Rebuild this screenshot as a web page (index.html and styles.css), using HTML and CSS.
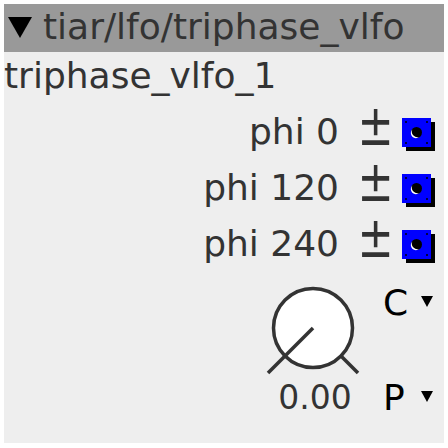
FILE: index.html
```html
<!DOCTYPE html>
<html>
<head>
<meta charset="utf-8">
<link rel="stylesheet" href="styles.css">
</head>
<body>
<div class="object">
  <div class="header">
    <svg class="collapse" width="24" height="21" viewBox="0 0 24 21"><polygon points="0,0 24,0 12,21" fill="#000"/></svg>
    <span class="title">tiar/lfo/triphase_vlfo</span>
  </div>
  <div class="name">triphase_vlfo_1</div>
  <div class="params">
    <div class="param">
      <span class="label">phi 0</span>
      <span class="pm"><span class="pm-glyph">±</span></span>
      <span class="toggle">
        <svg width="29" height="29" viewBox="0 0 29 29">
          <rect x="3" y="3" width="2" height="2" fill="#000044"/><rect x="24" y="3" width="2" height="2" fill="#000044"/>
          <rect x="3" y="24" width="2" height="2" fill="#000044"/><rect x="24" y="24" width="2" height="2" fill="#000044"/>
          <circle cx="14.5" cy="14.5" r="5.5" fill="#000"/>
          <path d="M10.3 11.5 A4.2 4.2 0 0 0 17.5 18.7 A5.5 5.5 0 0 1 10.3 11.5 Z" fill="#fff"/>
        </svg>
      </span>
    </div>
    <div class="param">
      <span class="label">phi 120</span>
      <span class="pm"><span class="pm-glyph">±</span></span>
      <span class="toggle">
        <svg width="29" height="29" viewBox="0 0 29 29">
          <rect x="3" y="3" width="2" height="2" fill="#000044"/><rect x="24" y="3" width="2" height="2" fill="#000044"/>
          <rect x="3" y="24" width="2" height="2" fill="#000044"/><rect x="24" y="24" width="2" height="2" fill="#000044"/>
          <circle cx="14.5" cy="14.5" r="5.5" fill="#000"/>
          <path d="M10.3 11.5 A4.2 4.2 0 0 0 17.5 18.7 A5.5 5.5 0 0 1 10.3 11.5 Z" fill="#fff"/>
        </svg>
      </span>
    </div>
    <div class="param">
      <span class="label">phi 240</span>
      <span class="pm"><span class="pm-glyph">±</span></span>
      <span class="toggle">
        <svg width="29" height="29" viewBox="0 0 29 29">
          <rect x="3" y="3" width="2" height="2" fill="#000044"/><rect x="24" y="3" width="2" height="2" fill="#000044"/>
          <rect x="3" y="24" width="2" height="2" fill="#000044"/><rect x="24" y="24" width="2" height="2" fill="#000044"/>
          <circle cx="14.5" cy="14.5" r="5.5" fill="#000"/>
          <path d="M10.3 11.5 A4.2 4.2 0 0 0 17.5 18.7 A5.5 5.5 0 0 1 10.3 11.5 Z" fill="#fff"/>
        </svg>
      </span>
    </div>
  </div>
  <div class="knobrow">
    <div class="knobcol">
      <svg class="knob" width="96" height="96" viewBox="0 0 96 96">
        <circle cx="49" cy="46" r="39.5" fill="#fff" stroke="#333" stroke-width="3.5"/>
        <line x1="49" y1="46" x2="4" y2="91" stroke="#333" stroke-width="3.5"/>
        <line x1="77" y1="74" x2="94" y2="91" stroke="#333" stroke-width="3.5"/>
      </svg>
      <div class="value">0.00</div>
    </div>
    <div class="selcol">
      <div class="sel">
        <span class="sel-label">C</span>
        <svg class="dd" width="12" height="11" viewBox="0 0 12 11"><polygon points="0,0 12,0 6,11" fill="#000"/></svg>
      </div>
      <div class="sel sel-p">
        <span class="sel-label">P</span>
        <svg class="dd" width="12" height="11" viewBox="0 0 12 11"><polygon points="0,0 12,0 6,11" fill="#000"/></svg>
      </div>
    </div>
  </div>
</div>
</body>
</html>
```

FILE: styles.css
```css
html, body {
  margin: 0;
  padding: 0;
  background: #ffffff;
}

body {
  font-family: "DejaVu Sans", sans-serif;
  color: #333333;
}

.object {
  margin: 4px;
  width: 440px;
  height: 439px;
  background: #eeeeee;
  font-size: 36px;
}

.header {
  height: 48px;
  background: #999999;
  display: flex;
  align-items: center;
  padding-left: 4px;
  box-sizing: border-box;
}

.collapse {
  display: block;
  margin-top: -1px;
}

.title {
  margin-left: 11px;
  line-height: 46px;
  margin-top: -2px;
}

.name {
  line-height: 47px;
  height: 47px;
}

.params {
  margin-top: 5px;
  display: flex;
  flex-direction: column;
  align-items: flex-end;
  padding-right: 13px;
}

.param {
  height: 56px;
  line-height: 56px;
  display: flex;
  align-items: baseline;
}

.label {
  margin-right: 22px;
}

.pm {
  display: flex;
  justify-content: center;
  width: 30px;
  margin-right: 11px;
  font-size: 42px;
  line-height: 40px;
}

.pm-glyph {
  display: block;
  transform-origin: 50% 80%;
  transform: scale(1.03, 1.36);
}

.toggle {
  display: block;
  align-self: center;
  width: 29px;
  height: 29px;
  background: #0000ff;
  box-shadow: 4px 4px 0 #000000;
  margin-top: 1px;
}

.toggle svg {
  display: block;
}

.knobrow {
  display: flex;
  justify-content: flex-end;
  padding-right: 11px;
}

.knobcol {
  display: flex;
  flex-direction: column;
  align-items: center;
  margin-top: 10px;
  width: 96px;
}

.knob {
  display: block;
}

.value {
  font-size: 33px;
  line-height: 40px;
  margin-left: 6px;
}

.selcol {
  margin-left: 23px;
  margin-top: 7px;
  display: flex;
  flex-direction: column;
}

.sel {
  display: flex;
  align-items: flex-start;
  line-height: 48px;
  height: 48px;
  color: #000000;
}

.sel-p {
  margin-top: 47px;
}

.sel-label {
  width: 38px;
}

.dd {
  display: block;
  margin-top: 17px;
}
```
